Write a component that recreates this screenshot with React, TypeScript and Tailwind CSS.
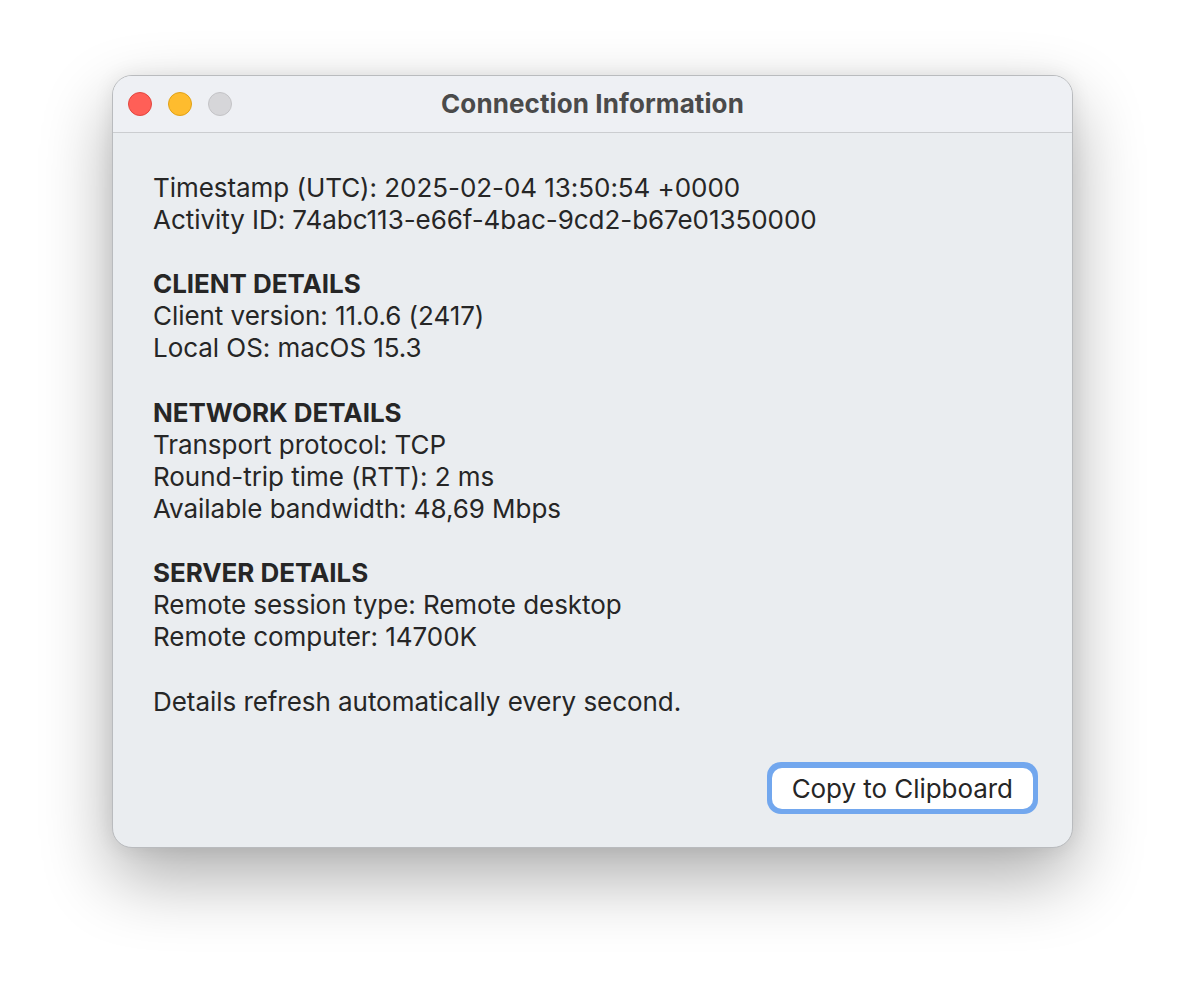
import React from 'react';

const lines: string[][] = [
  ['Timestamp (UTC): 2025-02-04 13:50:54 +0000', 'Activity ID: 74abc113-e66f-4bac-9cd2-b67e01350000'],
  ['#CLIENT DETAILS', 'Client version: 11.0.6 (2417)', 'Local OS: macOS 15.3'],
  ['#NETWORK DETAILS', 'Transport protocol: TCP', 'Round-trip time (RTT): 2 ms', 'Available bandwidth: 48,69 Mbps'],
  ['#SERVER DETAILS', 'Remote session type: Remote desktop', 'Remote computer: 14700K'],
  ['Details refresh automatically every second.'],
];

const TrafficLight: React.FC<{ color: string }> = ({ color }) => (
  <span className={`block w-[24px] h-[24px] rounded-full border ${color}`} />
);

export default function App() {
  return (
    <div className="w-[1184px] h-[996px] bg-white pl-[112px] pt-[75px] font-['Inter',sans-serif] text-[#262626]">
      <div className="w-[961px] h-[773px] rounded-[20px] bg-[#eaedf0] border border-[#b9bbbe] shadow-[0_30px_70px_rgba(0,0,0,0.32),0_0_20px_rgba(0,0,0,0.08)] flex flex-col overflow-hidden">
        {/* Title bar */}
        <div className="relative h-[57px] shrink-0 bg-[#eef0f4] border-b border-[#cbcdd0] flex items-center">
          <div className="flex items-center gap-[16px] pl-[15px]">
            <TrafficLight color="bg-[#ff5f57] border-[#e2463f]" />
            <TrafficLight color="bg-[#febc2e] border-[#e1a116]" />
            <TrafficLight color="bg-[#d6d6d9] border-[#c3c3c6]" />
          </div>
          <div className="absolute inset-0 flex items-center justify-center pb-[2px] text-[26px] font-bold text-[#4a4a4a] tracking-[0.1px]">
            Connection Information
          </div>
        </div>

        {/* Body */}
        <div className="flex-1 flex flex-col pl-[40px] pr-[34px] pt-[39px] pb-[33px]">
          <div className="flex flex-col gap-[32.1px] text-[26px] leading-[32.1px] tracking-[-0.05px]">
            {lines.map((group, i) => (
              <div key={i}>
                {group.map((line, j) =>
                  line.startsWith('#') ? (
                    <div key={j} className="font-bold">{line.slice(1)}</div>
                  ) : (
                    <div key={j}>{line}</div>
                  )
                )}
              </div>
            ))}
          </div>

          <div className="mt-auto flex justify-end">
            <button className="h-[52px] px-[5px] rounded-[14px] bg-[#72a7ee] flex items-center">
              <span className="h-[41px] px-[20px] rounded-[10px] bg-white flex items-center text-[26px] text-[#262626] tracking-[-0.05px]">
                Copy to Clipboard
              </span>
            </button>
          </div>
        </div>
      </div>
    </div>
  );
}
